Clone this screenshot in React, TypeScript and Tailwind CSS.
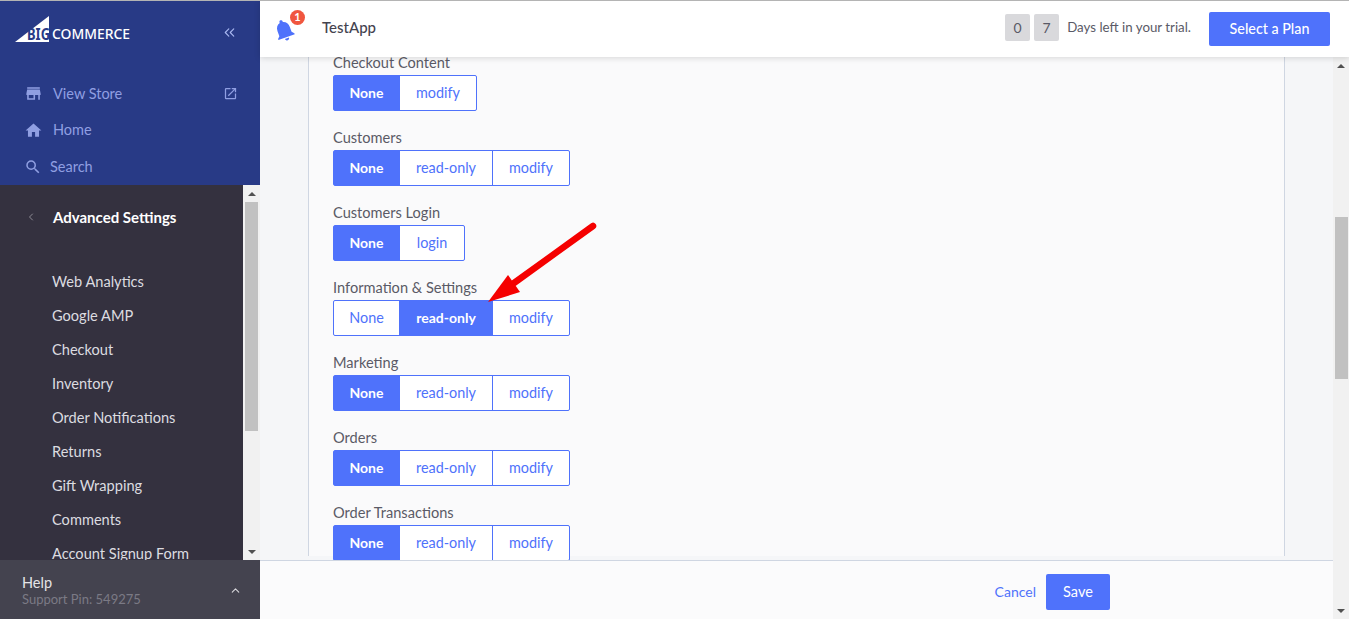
import { ChevronsLeft, ChevronLeft, ChevronUp } from 'lucide-react';
import { MdStore, MdHome, MdSearch, MdOpenInNew, MdNotifications } from 'react-icons/md';

type Group = { label: string; options: { text: string; w: string }[]; active: number };

const none = { text: 'None', w: 'w-[65px]' };
const readOnly = { text: 'read-only', w: 'w-[93px]' };
const modify = { text: 'modify', w: 'w-[77px]' };

const groups: Group[] = [
  { label: 'Checkout Content', options: [none, modify], active: 0 },
  { label: 'Customers', options: [none, readOnly, modify], active: 0 },
  { label: 'Customers Login', options: [none, { text: 'login', w: 'w-[65px]' }], active: 0 },
  { label: 'Information & Settings', options: [none, readOnly, modify], active: 1 },
  { label: 'Marketing', options: [none, readOnly, modify], active: 0 },
  { label: 'Orders', options: [none, readOnly, modify], active: 0 },
  { label: 'Order Transactions', options: [none, readOnly, modify], active: 0 },
];

const menu = [
  'Web Analytics',
  'Google AMP',
  'Checkout',
  'Inventory',
  'Order Notifications',
  'Returns',
  'Gift Wrapping',
  'Comments',
  'Account Signup Form',
];

function Scrollbar({ thumbTop, thumbHeight, width }: { thumbTop: string; thumbHeight: string; width: string }) {
  return (
    <div className={`${width} shrink-0 h-full bg-[#f1f1f1] flex flex-col items-center`}>
      <div className="h-[17px] w-full flex items-center justify-center shrink-0">
        <div className="w-0 h-0 border-x-[4px] border-x-transparent border-b-[4px] border-b-[#505050]" />
      </div>
      <div className={`${thumbTop} ${thumbHeight} w-[13px] bg-[#c1c1c1]`} />
      <div className="mt-auto h-[17px] w-full flex items-center justify-center shrink-0">
        <div className="w-0 h-0 border-x-[4px] border-x-transparent border-t-[4px] border-t-[#505050]" />
      </div>
    </div>
  );
}

function Logo() {
  return (
    <svg width="120" height="30" viewBox="0 0 120 30" className="block">
      <polygon points="0,26 34,0 34,26" fill="#fff" />
      <text x="12" y="24" fontSize="15.5" fontWeight="700" fill="#283a86" fontFamily="'Noto Sans', sans-serif" textLength="23" lengthAdjust="spacingAndGlyphs">BIG</text>
      <text x="37" y="23" fontSize="14" fontWeight="500" fill="#fff" fontFamily="'Noto Sans', sans-serif" textLength="78" lengthAdjust="spacingAndGlyphs">COMMERCE</text>
    </svg>
  );
}

function Sidebar() {
  return (
    <aside className="w-[260px] shrink-0 h-full flex flex-col">
      <div className="h-[184px] shrink-0 bg-[#283a86] text-[#909fe2] text-[14.5px]">
        <div className="h-[66px] pl-[15px] pr-[22px] pt-[15px] flex items-start justify-between">
          <Logo />
          <ChevronsLeft size={17} strokeWidth={1.6} className="text-[#a9b8f1] mt-[8px]" />
        </div>
        <div className="h-[37px] pl-[24px] pr-[22px] mt-[8px] flex items-center">
          <MdStore size={19} className="shrink-0" />
          <span className="ml-[10px]">View Store</span>
          <MdOpenInNew size={15} className="ml-auto" />
        </div>
        <div className="h-[36px] pl-[24px] flex items-center">
          <MdHome size={19} className="shrink-0" />
          <span className="ml-[10px]">Home</span>
        </div>
        <div className="h-[37px] pl-[24px] flex items-center">
          <MdSearch size={18} className="shrink-0" />
          <span className="ml-[8px]">Search</span>
        </div>
      </div>
      <div className="flex-1 min-h-0 flex bg-[#34313f]">
        <div className="flex-1 min-w-0 overflow-hidden">
          <div className="h-[64px] pl-[25px] flex items-center">
            <ChevronLeft size={12} className="text-[#8d8b94]" />
            <span className="ml-[16px] text-[15px] font-bold text-white">Advanced Settings</span>
          </div>
          <ul className="mt-[16px] pl-[52px] text-[14.6px] text-[#dcdce0]">
            {menu.map((item) => (
              <li key={item} className="h-[34px] flex items-center whitespace-nowrap">{item}</li>
            ))}
          </ul>
        </div>
        <Scrollbar width="w-[17px]" thumbTop="mt-0" thumbHeight="h-[229px]" />
      </div>
      <div className="h-[59px] shrink-0 bg-[#44434f] pl-[22px] pr-[18px] pt-[2px] flex items-center justify-between">
        <div className="leading-[17px]">
          <div className="text-[14.5px] text-[#e4e4e7]">Help</div>
          <div className="text-[13px] text-[#7b7a85]">Support Pin: 549275</div>
        </div>
        <ChevronUp size={13} className="text-[#d8d8dc]" />
      </div>
    </aside>
  );
}

function PermissionGroup({ group }: { group: Group }) {
  return (
    <div className="h-[75px]">
      <div className="h-[18px] pt-[1px] leading-[18px] text-[14.6px] text-[#5a5a66]">{group.label}</div>
      <div className="mt-[4px] flex w-fit h-[36px] border border-[#4f72fb] rounded-[2px] bg-white">
        {group.options.map((opt, i) => (
          <div
            key={opt.text}
            className={`${opt.w} pb-[1px] flex items-center justify-center ${i > 0 ? 'border-l border-[#4f72fb]' : ''} ${
              i === group.active ? 'bg-[#4f72fb] text-white text-[14px] font-bold' : 'text-[#4f72fb] text-[14.4px]'
            }`}
          >
            {opt.text}
          </div>
        ))}
      </div>
    </div>
  );
}

function Header() {
  return (
    <header className="relative z-10 h-[56px] shrink-0 bg-white shadow-[0_1px_6px_rgba(0,0,0,0.15)] flex items-center pl-[15px] pr-[19px]">
      <div className="relative w-[24px] h-[24px] -mt-[1px]">
        <MdNotifications size={26} className="text-[#4f72fb] -rotate-[20deg] -ml-[4px]" />
        <span className="absolute -top-[7px] left-[15px] w-[15px] h-[15px] rounded-full bg-[#f0563f] text-white text-[11px] font-bold flex items-center justify-center">1</span>
      </div>
      <span className="ml-[23px] -mt-[3px] text-[15px] font-medium text-[#44434f]">TestApp</span>
      <div className="ml-auto flex items-center text-[14px] text-[#5a5a66]">
        <div className="flex items-center -mt-[3px]">
          <span className="w-[25px] h-[27px] rounded-[2px] bg-[#d9d9dc] flex items-center justify-center">0</span>
          <span className="ml-[4px] w-[25px] h-[27px] rounded-[2px] bg-[#d9d9dc] flex items-center justify-center">7</span>
          <span className="ml-[8px] text-[13.3px]">Days left in your trial.</span>
        </div>
        <button className="ml-[18px] w-[121px] h-[34px] rounded-[2px] bg-[#4f72fb] text-white text-[14.3px] font-medium">Select a Plan</button>
      </div>
    </header>
  );
}

export default function App() {
  return (
    <div className="w-[1349px] h-[619px] overflow-hidden border-t border-[#b4b4b4] flex font-['Lato',sans-serif] bg-[#f5f6f8]">
      <Sidebar />
      <div className="flex-1 min-w-0 h-full flex flex-col">
        <Header />
        <div className="flex-1 min-h-0 flex">
          <div className="flex-1 min-w-0 flex flex-col">
            <div className="flex-1 min-h-0 overflow-hidden px-[48px]">
              <div className="relative h-full border-x border-[#cfd6e2] bg-[#fafafb] pl-[24px] -mt-[4px]">
                {groups.map((g) => (
                  <PermissionGroup key={g.label} group={g} />
                ))}
                <svg className="absolute left-[160px] top-[165px]" width="130" height="90" viewBox="0 0 130 90">
                  <path d="M124 8 L45 65" stroke="#f50000" strokeWidth="6.5" strokeLinecap="round" fill="none" />
                  <polygon points="19,84 39,57 51,74" fill="#f50000" />
                </svg>
              </div>
            </div>
            <footer className="h-[59px] shrink-0 bg-[#fbfbfc] border-t border-[#cfd6e2] pt-[4px] flex items-center justify-end pr-[223px]">
              <span className="text-[14px] text-[#4f72fb] -mt-[1px]">Cancel</span>
              <button className="ml-[10px] w-[64px] h-[36px] rounded-[2px] bg-[#4f72fb] text-white text-[14.5px]">Save</button>
            </footer>
          </div>
          <Scrollbar width="w-[16px]" thumbTop="mt-[143px]" thumbHeight="h-[162px]" />
        </div>
      </div>
    </div>
  );
}
